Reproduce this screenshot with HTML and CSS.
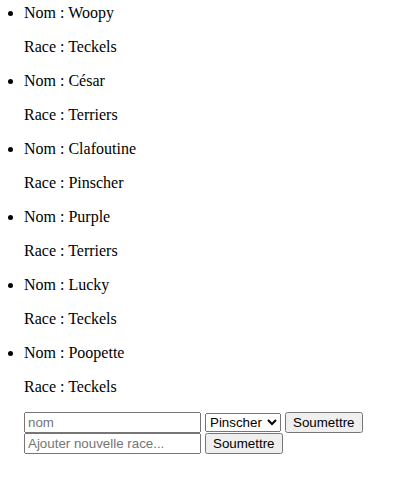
FILE: index.html
```html
<!DOCTYPE html>
<html lang="fr">
<head>
<meta charset="utf-8">
<title>Chiens</title>
<link rel="stylesheet" href="styles.css">
</head>
<body>
<ul class="dogs">
  <li class="dog"><p>Nom : Woopy</p><p>Race : Teckels</p></li>
  <li class="dog"><p>Nom : César</p><p>Race : Terriers</p></li>
  <li class="dog"><p>Nom : Clafoutine</p><p>Race : Pinscher</p></li>
  <li class="dog"><p>Nom : Purple</p><p>Race : Terriers</p></li>
  <li class="dog"><p>Nom : Lucky</p><p>Race : Teckels</p></li>
  <li class="dog"><p>Nom : Poopette</p><p>Race : Teckels</p></li>
  <form class="form">
    <input class="field text" type="text" placeholder="nom">
    <select class="field choice">
      <option>Pinscher</option>
      <option>Teckels</option>
      <option>Terriers</option>
    </select>
    <button class="field submit" type="button">Soumettre</button>
  </form>
  <form class="form">
    <input class="field text" type="text" placeholder="Ajouter nouvelle race...">
    <button class="field submit" type="button">Soumettre</button>
  </form>
</ul>
</body>
</html>
```

FILE: styles.css
```css
html, body {
  background: #ffffff;
}
body {
  margin: 0;
  font-family: "Liberation Serif", "Times New Roman", serif;
  font-size: 16px;
  line-height: 18px;
  color: #000000;
}
.dogs {
  margin: 0;
  padding: 4px 0 0 24px;
}
.dog p {
  margin: 16px 0;
}
.dog:first-child p:first-child {
  margin-top: 0;
}
.form {
  margin: 0;
  line-height: normal;
}
.field {
  font-family: "Liberation Sans", Arial, sans-serif;
  font-size: 13.333px;
  box-sizing: border-box;
}
.text {
  width: 177px;
  height: 21px;
}
.text::placeholder {
  color: #757575;
}
.choice {
  width: 76px;
  height: 19px;
}
.submit {
  height: 21px;
}
```
